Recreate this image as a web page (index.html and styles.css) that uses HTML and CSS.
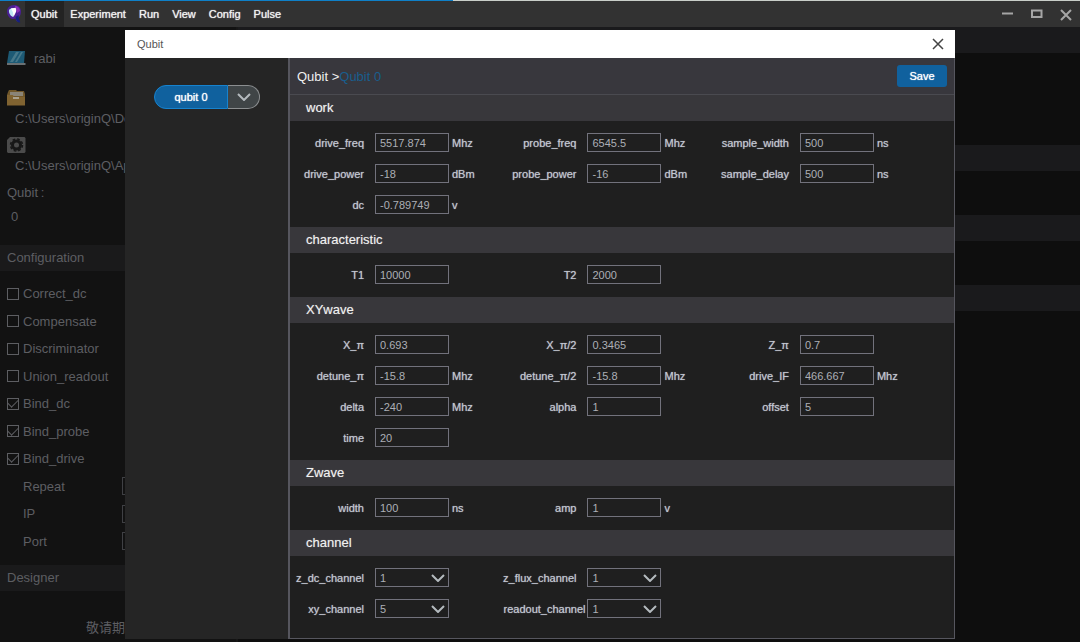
FILE: index.html
```
<!DOCTYPE html>
<html lang="en">
  <head>
    <meta charset="UTF-8" />
    <meta name="viewport" content="width=device-width, initial-scale=1.0" />
    <title>Qubit</title>
    <link rel="stylesheet" href="styles.css">
  </head>
  <body>
    <header class="menubar">
      <svg class="logo" viewBox="0 0 16 20" aria-hidden="true">
        <path d="M8 1C3.500 1 1 4 1 7.500c0 4 2.500 7 5.500 7.500 1 .2 2-.2 3-.5.500 2 1.500 4 4.500 3.500-1-1-1.500-2.500-1.200-4.500C14.500 11.500 15 9.500 15 7.500 15 3.500 12 1 8 1z" fill="#4a2094" />
        <path d="M3 6c1-1.500 3-2 5-1.500l1 4-2 4.500C4.500 12 2.500 9 3 6z" fill="#bfe8f4" />
        <path d="M5 4.500l2 4 .5 4.500L10 8l1-4.500z" fill="#fff" />
        <path d="M9 2c3 0 5 2.500 5 5l-3 2-1-4z" fill="#8b2fb5" />
        <path d="M9.500 13l3-2 .3 3 1.500 4.500c-3 .3-4-1.500-4.800-5.500z" fill="#15207e" />
      </svg>
      <nav class="menu">
        <a href="#" class="active">Qubit</a>
        <a href="#">Experiment</a>
        <a href="#">Run</a>
        <a href="#">View</a>
        <a href="#">Config</a>
        <a href="#">Pulse</a>
      </nav>
      <div class="window-buttons">
        <button aria-label="Minimize"><svg viewBox="0 0 12 12"><path d="M0 5.500h11" /></svg></button>
        <button aria-label="Maximize"><svg viewBox="0 0 12 12"><path d="M1 2.500h9.500v6.500H1z" /></svg></button>
        <button aria-label="Close"><svg viewBox="0 0 12 12"><path d="M1 2l10 10M11 2L1 12" /></svg></button>
      </div>
    </header>

    <div class="workspace">
      <aside class="sidebar">
        <div class="file-row">
          <svg class="file-icon" viewBox="0 0 19 19" aria-hidden="true">
            <path d="M2 2h16l-1 12H0z" fill="#1d5a75" />
            <path d="M9 3h3L6 13H3zM14 3h2l-6 10H8z" fill="#47788a" />
            <path d="M0 14h18.500v2H0z" fill="#6b7072" />
          </svg>
          <span>rabi</span>
        </div>
        <div class="path-row">
          <svg class="file-icon" viewBox="0 0 19 19" aria-hidden="true">
            <path d="M1 3l1-2h7l1 1h7l1 3v11H0V6z" fill="#70572a" />
            <path d="M3 3h13v4H3z" fill="#8a8477" />
            <path d="M0 6h6l1 2h11v8.500H0z" fill="#806331" />
            <path d="M6 8h6v2H6z" fill="#aaa18e" />
          </svg>
          <span>C:\Users\originQ\Documents</span>
        </div>
        <div class="path-row">
          <svg class="file-icon" viewBox="0 0 19 19" aria-hidden="true">
            <path d="M3 1h14.500l1 1v14l-1 1H1l-1-1V4z" fill="#4b4b4b" />
            <circle cx="9.500" cy="9" r="5.500" fill="#171717" />
            <circle cx="9.500" cy="9" r="6" fill="none" stroke="#171717" stroke-width="1.500" stroke-dasharray="2.700 2" />
            <circle cx="9.500" cy="9" r="2.500" fill="#4b4b4b" />
          </svg>
          <span>C:\Users\originQ\AppData</span>
        </div>
        <p class="qubit-label">Qubit&thinsp;:</p>
        <p class="qubit-value">0</p>

        <h2>Configuration</h2>
        <div class="options">
          <label><input type="checkbox"> Correct_dc</label>
          <label><input type="checkbox"> Compensate</label>
          <label><input type="checkbox"> Discriminator</label>
          <label><input type="checkbox"> Union_readout</label>
          <label><input type="checkbox" checked> Bind_dc</label>
          <label><input type="checkbox" checked> Bind_probe</label>
          <label><input type="checkbox" checked> Bind_drive</label>
          <label class="text-option">Repeat <input type="text"></label>
          <label class="text-option">IP <input type="text"></label>
          <label class="text-option">Port <input type="text"></label>
        </div>
        <h2>Designer</h2>
        <p class="coming">敬请期待</p>
      </aside>
      <main class="results">
        <div class="band"></div>
        <div class="band"></div>
        <div class="band"></div>
        <div class="band"></div>
      </main>
    </div>

    <div class="dialog" role="dialog" aria-labelledby="dialog-title">
      <div class="dialog-title">
        <span id="dialog-title">Qubit</span>
        <button aria-label="Close dialog"><svg viewBox="0 0 12 12"><path d="M1 1l10 10M11 1L1 11" /></svg></button>
      </div>
      <div class="dialog-body">
        <div class="qubit-list">
          <div class="qubit-item">
            <button class="qubit-name">qubit 0</button>
            <button class="qubit-more" aria-label="Expand"><svg viewBox="0 0 14 8"><path d="M1 1l6 6 6-6" /></svg></button>
          </div>
        </div>
        <form class="editor">
          <div class="crumbs">
            <span>Qubit &gt;<a href="#">Qubit 0</a></span>
            <button type="button" class="save">Save</button>
          </div>

          <h3>work</h3>
          <div class="fields">
            <div class="field"><label for="drive_freq">drive_freq</label><input id="drive_freq" value="5517.874"><span>Mhz</span></div>
            <div class="field"><label for="probe_freq">probe_freq</label><input id="probe_freq" value="6545.5"><span>Mhz</span></div>
            <div class="field"><label for="sample_width">sample_width</label><input id="sample_width" value="500"><span>ns</span></div>
            <div class="field"><label for="drive_power">drive_power</label><input id="drive_power" value="-18"><span>dBm</span></div>
            <div class="field"><label for="probe_power">probe_power</label><input id="probe_power" value="-16"><span>dBm</span></div>
            <div class="field"><label for="sample_delay">sample_delay</label><input id="sample_delay" value="500"><span>ns</span></div>
            <div class="field"><label for="dc">dc</label><input id="dc" value="-0.789749"><span>v</span></div>
          </div>

          <h3>characteristic</h3>
          <div class="fields">
            <div class="field"><label for="t1">T1</label><input id="t1" value="10000"></div>
            <div class="field"><label for="t2">T2</label><input id="t2" value="2000"></div>
          </div>

          <h3>XYwave</h3>
          <div class="fields">
            <div class="field"><label for="x_pi">X_π</label><input id="x_pi" value="0.693"></div>
            <div class="field"><label for="x_pi2">X_π/2</label><input id="x_pi2" value="0.3465"></div>
            <div class="field"><label for="z_pi">Z_π</label><input id="z_pi" value="0.7"></div>
            <div class="field"><label for="detune_pi">detune_π</label><input id="detune_pi" value="-15.8"><span>Mhz</span></div>
            <div class="field"><label for="detune_pi2">detune_π/2</label><input id="detune_pi2" value="-15.8"><span>Mhz</span></div>
            <div class="field"><label for="drive_if">drive_IF</label><input id="drive_if" value="466.667"><span>Mhz</span></div>
            <div class="field"><label for="delta">delta</label><input id="delta" value="-240"><span>Mhz</span></div>
            <div class="field"><label for="alpha">alpha</label><input id="alpha" value="1"></div>
            <div class="field"><label for="offset">offset</label><input id="offset" value="5"></div>
            <div class="field"><label for="time">time</label><input id="time" value="20"></div>
          </div>

          <h3>Zwave</h3>
          <div class="fields">
            <div class="field"><label for="width">width</label><input id="width" value="100"><span>ns</span></div>
            <div class="field"><label for="amp">amp</label><input id="amp" value="1"><span>v</span></div>
          </div>

          <h3>channel</h3>
          <div class="fields">
            <div class="field"><label for="z_dc">z_dc_channel</label><div class="select"><select id="z_dc"><option>1</option></select><svg viewBox="0 0 14 8"><path d="M1 1l6 6 6-6" /></svg></div></div>
            <div class="field"><label for="z_flux">z_flux_channel</label><div class="select"><select id="z_flux"><option>1</option></select><svg viewBox="0 0 14 8"><path d="M1 1l6 6 6-6" /></svg></div></div>
            <div class="field first"><label for="xy">xy_channel</label><div class="select"><select id="xy"><option>5</option></select><svg viewBox="0 0 14 8"><path d="M1 1l6 6 6-6" /></svg></div></div>
            <div class="field long"><label for="readout">readout_channel</label><div class="select"><select id="readout"><option>1</option></select><svg viewBox="0 0 14 8"><path d="M1 1l6 6 6-6" /></svg></div></div>
          </div>
        </form>
      </div>
    </div>
  </body>
</html>
```

FILE: styles.css
```
* {
  box-sizing: border-box;
}

body {
  margin: 0;
  height: 100vh;
  overflow: hidden;
  display: flex;
  flex-direction: column;
  background-color: #0e0e0e;
  color: #5d5e62;
  font-family: "Liberation Sans", "Noto Sans CJK SC", sans-serif;
  font-size: 13px;
}

h2, h3, p {
  margin: 0;
  font-weight: normal;
}

a {
  text-decoration: none;
}

button, input, select {
  margin: 0;
  padding: 0;
  border: none;
  border-radius: 0;
  background: none;
  font-family: inherit;
  font-size: 11px;
  color: inherit;
}

svg {
  display: block;
  fill: none;
}

.menubar {
  display: flex;
  align-items: center;
  flex-shrink: 0;
  height: 27px;
  border-top: 1px solid;
  border-image: linear-gradient(to right, #0f80c8 42%, #c9cec9 42%) 1;
  background-color: #323232;
}

.logo {
  width: 16px;
  height: 20px;
  margin: 0 3px 0 6px;
}

.menu {
  display: flex;
  align-self: stretch;
}

.menu a {
  display: flex;
  align-items: center;
  padding: 0 7px 0 6px;
  color: #f2f2f2;
  font-size: 11px;
  text-shadow: 0 0 1px #f2f2f2;
}

.menu .active {
  background-color: #232323;
}

.window-buttons {
  display: flex;
  gap: 17px;
  margin-left: auto;
  padding-right: 8px;
}

.window-buttons svg {
  width: 12px;
  height: 12px;
  stroke: #a5a5a5;
  stroke-width: 2;
  overflow: visible;
}

.workspace {
  display: flex;
  flex: 1;
  min-height: 0;
}

.sidebar {
  width: 22%;
  padding-top: 22px;
  background-color: #121212;
  border-right: 2px solid #171717;
  overflow: hidden;
  white-space: nowrap;
}

.file-icon {
  width: 19px;
  height: 19px;
}

.file-row {
  display: flex;
  align-items: center;
  gap: 8px;
  height: 19px;
  margin-bottom: 21px;
  padding-left: 7px;
}

.path-row {
  height: 47px;
  padding-left: 7px;
}

.path-row span {
  display: block;
  padding: 3px 0 0 8px;
}

.qubit-label {
  padding: 2px 7px 0;
}

.qubit-value {
  padding: 9px 11px 21px;
}

.sidebar h2 {
  height: 26px;
  padding-left: 7px;
  background-color: #1a1a1b;
  font-size: 13px;
  line-height: 26px;
}

.options {
  display: grid;
  grid-auto-rows: 1fr;
  height: 294px;
  padding: 9px 0 10px 7px;
}

.options label {
  display: flex;
  align-items: center;
  gap: 4px;
}

.options input[type="checkbox"] {
  appearance: none;
  display: grid;
  place-items: center;
  width: 12px;
  height: 12px;
  border: 1px solid #5d5e62;
}

.options input:checked::before {
  content: "";
  width: 9px;
  height: 5px;
  margin-bottom: 3px;
  border: solid #5d5e62;
  border-width: 0 0 1px 1px;
  transform: rotate(-45deg);
}

.options .text-option {
  justify-content: space-between;
  padding: 0 42px 0 16px;
}

.text-option input {
  width: 72px;
  height: 18px;
  border: 1px solid #3f4044;
}

.coming {
  padding: 26px 0 0 86px;
}

.results {
  flex: 1;
}

.band {
  height: 26px;
  margin-bottom: 44px;
  background-color: #1a1a1c;
}

.band:first-child {
  margin-bottom: 92px;
}

/* dialog over the dimmed workspace */
.dialog {
  position: absolute;
  top: 30px;
  left: 125px;
  right: 125px;
  bottom: 3px;
  display: flex;
  flex-direction: column;
  background-color: #252525;
}

.dialog-title {
  display: flex;
  align-items: center;
  justify-content: space-between;
  height: 28px;
  padding: 0 11px 0 12px;
  background-color: #fff;
  color: #555;
  font-size: 11px;
}

.dialog-title svg {
  width: 12px;
  height: 12px;
  stroke: #444;
  stroke-width: 1.5;
}

.dialog-body {
  display: flex;
  flex: 1;
  min-height: 0;
}

.qubit-list {
  width: 163px;
  padding: 27px 0 0 29px;
}

.qubit-item {
  display: flex;
  width: 106px;
  height: 24px;
}

.qubit-name {
  flex: 1;
  border: 1px solid #1683cf;
  border-radius: 12px 0 0 12px;
  background-color: #10619e;
  color: #fff;
  text-shadow: 0 0 1px #fff;
}

.qubit-more {
  display: grid;
  place-items: center;
  width: 32px;
  border: 1px solid #8b8e90;
  border-left: none;
  border-radius: 0 12px 12px 0;
  background-color: #404547;
}

.qubit-more svg, .select svg {
  width: 14px;
  height: 8px;
  stroke: #b4babe;
  stroke-width: 2;
}

.editor {
  flex: 1;
  border: solid #56565e;
  border-width: 0 1px 1px 2px;
  background-color: #1f1f1f;
}

.crumbs {
  display: flex;
  align-items: center;
  justify-content: space-between;
  height: 37px;
  padding: 0 7px;
  border-bottom: 1px solid #4a4a50;
  background-color: #38373d;
  color: #f0f0f0;
}

.crumbs a {
  color: #195e8e;
}

.save {
  width: 50px;
  height: 22px;
  border-radius: 3px;
  background-color: #10619e;
  color: #fff;
  text-shadow: 0 0 1px #fff;
}

.editor h3 {
  height: 26px;
  padding-left: 16px;
  background-color: #38373b;
  color: #f0f0f0;
  font-size: 13px;
  line-height: 26px;
  text-shadow: 0 0 1px #909090;
}

.fields {
  display: grid;
  grid-template-columns: 32% 32% 1fr;
  row-gap: 12px;
  padding: 12px 0 13px;
  color: #c3c7d2;
  font-size: 11px;
}

.field {
  display: flex;
  align-items: center;
  height: 19px;
}

.field.first {
  grid-column: 1;
}

.field label {
  width: 85px;
  padding-right: 11px;
  text-align: right;
  text-shadow: 0 0 1px #a0a3ac;
}

.field.long label {
  padding-right: 2px;
}

.field span {
  padding-left: 3px;
  text-shadow: 0 0 1px #a0a3ac;
}

.field input, .select {
  width: 74px;
  height: 19px;
  border: 1px solid #72727c;
  color: #adafb6;
}

.field input {
  padding: 0 4px;
}

.select {
  display: grid;
  grid-template-columns: 1fr 20px;
  align-items: center;
}

.select select {
  grid-area: 1 / 1 / 2 / 3;
  height: 17px;
  padding-left: 4px;
  appearance: none;
}

.select svg {
  grid-area: 1 / 2;
  margin-left: 3px;
  pointer-events: none;
}
```
